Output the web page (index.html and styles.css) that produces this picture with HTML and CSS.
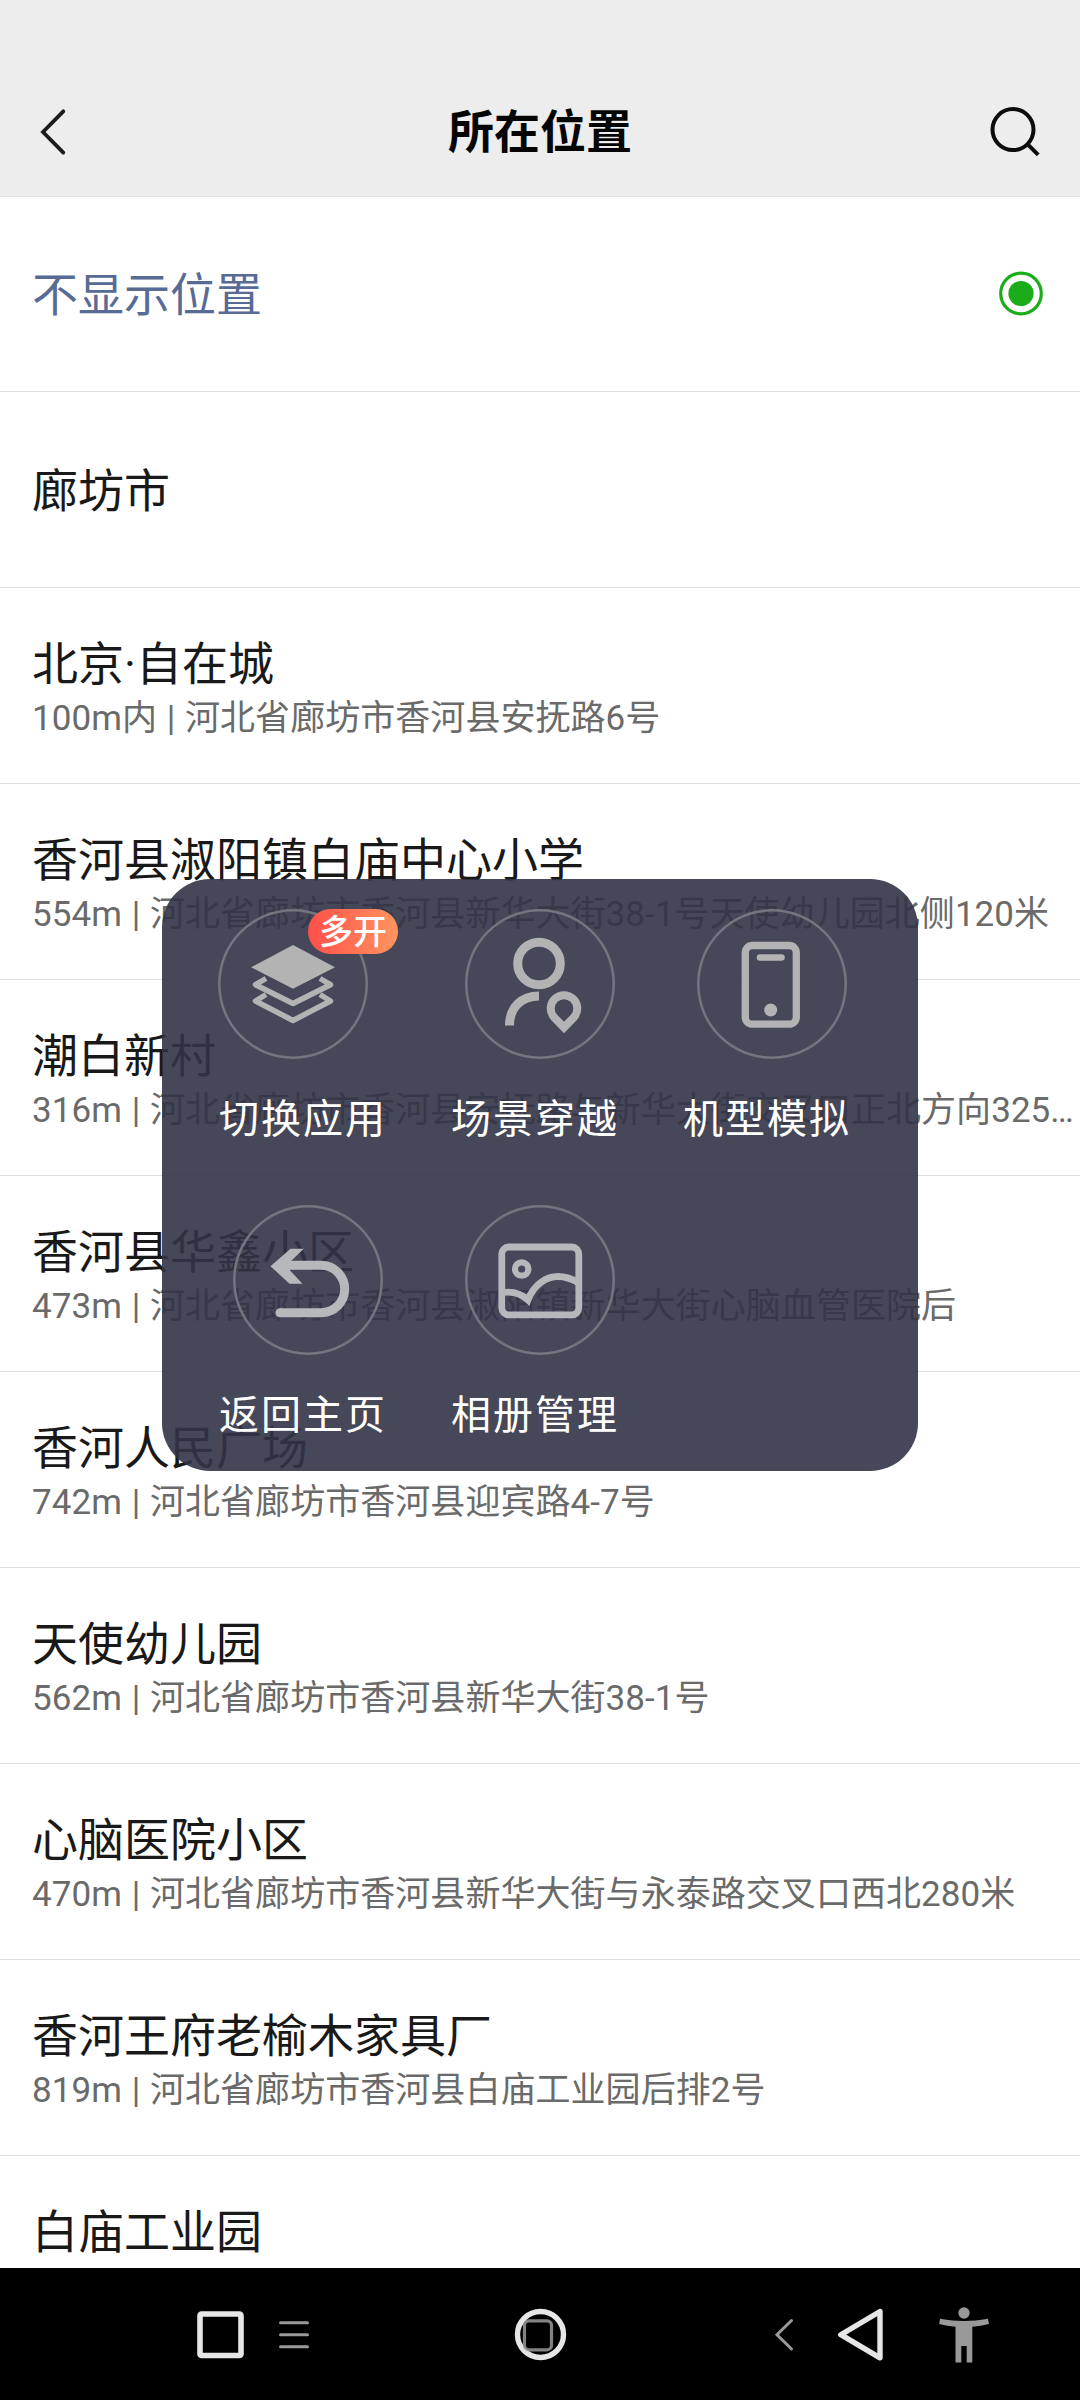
FILE: index.html
```html
<!DOCTYPE html>
<html lang="zh-CN">
<head>
<meta charset="utf-8">
<title>所在位置</title>
<link rel="stylesheet" href="styles.css">
</head>
<body>
<div class="screen">
  <header class="header">
    <svg class="header-icon" width="60" height="60" viewBox="0 0 60 60"><path d="M39.300 11.300L19 32L39.300 52.600" fill="none" stroke="#1c1c1c" stroke-width="3.800" stroke-linecap="round"/></svg>
    <h1 class="header-title">所在位置</h1>
    <svg class="header-icon" width="60" height="60" viewBox="0 0 60 60"><g fill="none" stroke="#0c0c0c" stroke-width="4"><circle cx="29" cy="29.600" r="20.500"/><path d="M43.200 43.800L54.200 54.800"/></g></svg>
  </header>
  <main class="list">
    <div class="row row-hide"><div class="name link">不显示位置</div>
      <svg width="46" height="46" viewBox="0 0 46 46"><circle cx="23" cy="22.500" r="20.300" fill="none" stroke="#1aad19" stroke-width="3.200"/><circle cx="23" cy="22.500" r="12.600" fill="#1aad19"/></svg>
    </div>
    <div class="row row-single"><div class="name">廊坊市</div></div>
    <div class="row"><div class="name">北京·自在城</div><div class="address">100m内 | 河北省廊坊市香河县安抚路6号</div></div>
    <div class="row"><div class="name">香河县淑阳镇白庙中心小学</div><div class="address">554m | 河北省廊坊市香河县新华大街38-1号天使幼儿园北侧120米</div></div>
    <div class="row"><div class="name">潮白新村</div><div class="address">316m | 河北省廊坊市香河县安抚路与新华大街交叉口正北方向325…</div></div>
    <div class="row"><div class="name">香河县华鑫小区</div><div class="address">473m | 河北省廊坊市香河县淑阳镇新华大街心脑血管医院后</div></div>
    <div class="row"><div class="name">香河人民广场</div><div class="address">742m | 河北省廊坊市香河县迎宾路4-7号</div></div>
    <div class="row"><div class="name">天使幼儿园</div><div class="address">562m | 河北省廊坊市香河县新华大街38-1号</div></div>
    <div class="row"><div class="name">心脑医院小区</div><div class="address">470m | 河北省廊坊市香河县新华大街与永泰路交叉口西北280米</div></div>
    <div class="row"><div class="name">香河王府老榆木家具厂</div><div class="address">819m | 河北省廊坊市香河县白庙工业园后排2号</div></div>
    <div class="row row-last"><div class="name">白庙工业园</div></div>
  </main>
  <nav class="navbar">
    <svg width="1080" height="132" viewBox="0 0 1080 132" fill="none">
      <rect x="200" y="46" width="41" height="41.500" rx="1.500" stroke="#e6e6e6" stroke-width="5.600"/>
      <path d="M280.500 54.700H307.500M280.500 66.700H307.500M280.500 78.700H307.500" stroke="#999" stroke-width="3" stroke-linecap="round"/>
      <circle cx="540.500" cy="66.500" r="23" stroke="#e6e6e6" stroke-width="5.400"/>
      <rect x="524.500" y="52.800" width="27" height="29" rx="4.500" stroke="#999" stroke-opacity="0.850" stroke-width="3.200"/>
      <path d="M791.500 52.500L777 66.700L791.500 81" stroke="#999" stroke-width="3" stroke-linecap="round"/>
      <path d="M880 43.500V89.800L840.800 66.700Z" stroke="#e6e6e6" stroke-width="5.400" stroke-linejoin="round"/>
      <g fill="#999"><circle cx="964" cy="45" r="5.700"/><path d="M940 50.800Q964 55.200 988 50.800L989 56Q981 58 972.300 58.800V94.500H966.700V78H961.300V94.500H955.500V58.800Q947 58 939.200 56Z"/></g>
    </svg>
  </nav>

  <section class="menu">
    <div class="item">
      <div class="figure figure-wide">
        <svg class="icon" viewBox="0 0 150 150"><path d="M75 36L117 58.300L75 79.700L33 58.300Z" fill="#b3b3b3"/><g fill="none" stroke="#b3b3b3" stroke-width="5.500" stroke-linejoin="round"><path d="M48 69.500L37.500 75.700L75 94.500L112.500 75.700L102 69.500"/><path d="M48 85.500L37.500 92L75 111.500L112.500 92L102 85.500"/></g></svg>
        <span class="badge">多开</span>
      </div>
      <div class="label">切换应用</div>
    </div>
    <div class="item">
      <div class="figure">
        <svg class="icon" viewBox="0 0 150 150"><g fill="none" stroke="#b3b3b3" stroke-width="9"><circle cx="74" cy="54.500" r="21.300"/><path d="M44.500 116.500C44.500 98 57 87 74 87"/><path d="M99 118.500L89 108.200A13.300 13.300 0 1 1 109 108.200Z" stroke-width="8"/></g></svg>
      </div>
      <div class="label">场景穿越</div>
    </div>
    <div class="item">
      <div class="figure">
        <svg class="icon" viewBox="0 0 150 150"><rect x="48.300" y="36.500" width="51" height="78.700" rx="7" fill="none" stroke="#b3b3b3" stroke-width="7.300"/><path d="M63 48.500H84.500" stroke="#b3b3b3" stroke-width="6.500" stroke-linecap="round"/><circle cx="73.700" cy="101" r="6.500" fill="#b3b3b3"/></svg>
      </div>
      <div class="label">机型模拟</div>
    </div>
    <div class="item">
      <div class="figure">
        <svg class="icon" viewBox="0 0 150 150"><path d="M54 60.300H88A23.700 23.700 0 0 1 88 107.700H47" fill="none" stroke="#b5b9bb" stroke-width="9"/><circle cx="47" cy="107.700" r="4.500" fill="#b5b9bb"/><path d="M37.500 61.300L57.500 43.700H70.700L57 57V65.500L69.500 78.700H56.500Z" fill="#b5b9bb"/></svg>
      </div>
      <div class="label">返回主页</div>
    </div>
    <div class="item">
      <div class="figure">
        <svg class="icon" viewBox="0 0 150 150"><g fill="none" stroke="#b5b9bb" stroke-width="6.800"><rect x="36.800" y="42" width="77" height="67.800" rx="7"/><circle cx="56.700" cy="64" r="6.700" stroke-width="6.200"/><path d="M38 87.500C48 86 56 88.500 63 95C69 79 82 71.500 93 71.500C101 71.500 107 74 113 77.500"/></g></svg>
      </div>
      <div class="label">相册管理</div>
    </div>
  </section>
</div>
</body>
</html>
```
FILE: styles.css
```css
* { box-sizing: border-box; }

body {
  margin: 0;
  background: #fff;
  font-family: Roboto, "Noto Sans CJK SC", sans-serif;
}

.screen {
  position: relative;
  display: flex;
  flex-direction: column;
  width: 1080px;
  height: 2400px;
  overflow: hidden;
}

.header {
  display: flex;
  flex: none;
  align-items: center;
  justify-content: space-between;
  height: 197px;
  padding: 63px 36px 0 24px;
  background: #ededed;
  border-bottom: 1px solid #e6e6e6;
}

.header-title {
  margin: 0 0 0 12px;
  padding-top: 4px;
  font-size: 46px;
  font-weight: 700;
  line-height: 60px;
  color: #050505;
}

.list {
  flex: 1;
  min-height: 0;
  overflow: hidden;
}

.row {
  display: flex;
  flex-direction: column;
  justify-content: center;
  height: 196px;
  padding: 6px 0 0 32px;
  border-bottom: 1px solid #e0e0e0;
  white-space: nowrap;
}

.row:first-child { height: 195px; }

.row-hide {
  flex-direction: row;
  align-items: center;
  justify-content: space-between;
  padding-top: 0;
  padding-right: 36px;
}

.row-hide .name { padding-top: 2px; }

.row-single { padding-top: 2px; }

.row-last {
  justify-content: flex-start;
  padding-top: 46px;
}

.name {
  font-size: 46px;
  line-height: 60px;
  color: #191919;
}

.link { color: #576b95; }

.address {
  margin-top: 1px;
  font-size: 35px;
  line-height: 48px;
  letter-spacing: 0.05px;
  word-spacing: 1px;
  color: #6a6a6a;
}

.navbar {
  flex: none;
  height: 132px;
  background: #000;
}

.navbar svg { display: block; }

.menu {
  position: absolute;
  left: 162px;
  top: 879px;
  display: grid;
  grid-template-columns: repeat(3, 232px);
  grid-template-rows: repeat(2, 296px);
  width: 756px;
  height: 592px;
  padding: 30px 30px 0;
  background: rgba(50, 51, 70, 0.9);
  border-radius: 48px;
}

.figure {
  position: relative;
  width: 150px;
  height: 150px;
  margin: 0 auto;
}

.figure-wide { width: 180px; }

.icon {
  display: block;
  width: 150px;
  height: 150px;
  border-radius: 50%;
  box-shadow: inset 0 0 0 2.5px #74757e;
}

.badge {
  position: absolute;
  top: 0;
  right: 0;
  width: 90px;
  height: 45px;
  border-radius: 23px;
  background: linear-gradient(90deg, #ff4f4a, #ff9560);
  font-size: 34px;
  font-weight: 500;
  line-height: 46px;
  text-align: center;
  color: #fff;
}

.label {
  margin-top: 31px;
  padding-right: 10px;
  font-size: 40px;
  line-height: 60px;
  letter-spacing: 2px;
  text-align: center;
  color: #fff;
}
```
